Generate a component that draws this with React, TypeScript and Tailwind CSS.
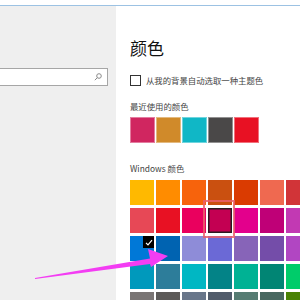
import React from "react";

const recent = ["#d02660", "#d08a2a", "#10b7c6", "#4a4848", "#e81123"];
const grid = [
  ["#ffb900", "#ff8c00", "#f7630c", "#ca5010", "#da3b01", "#ef6950", "#d13438"],
  ["#e74856", "#e81123", "#ea005e", "#c30052", "#e3008c", "#bf0077", "#c239b3"],
  ["#0078d7", "#0063b1", "#8e8cd8", "#6b69d6", "#8764b8", "#744da9", "#b146c2"],
  ["#0099bc", "#2d7d9a", "#00b7c3", "#038387", "#00b294", "#018574", "#00cc6a"],
  ["#7a7574", "#5d5a58", "#68768a", "#515c6b", "#567c73", "#486860", "#498205"],
];

export default function App() {
  return (
    <div
      className="relative w-[300px] h-[300px] overflow-hidden bg-white flex flex-col"
      style={{ fontFamily: '"Noto Sans CJK SC", "Noto Sans", sans-serif' }}
    >
      <div className="h-[5px] bg-white shrink-0" />
      <div className="h-px bg-[#9cc2e3] shrink-0" />
      <div className="flex flex-1 min-h-0">
        <div className="w-[116px] shrink-0 bg-[#efefef] flex flex-col">
          <div className="mt-[62px] ml-[-2px] w-[110px] h-[18px] bg-white border border-[#a6a6a6] flex items-center justify-end pr-[5px]">
            <svg width="8" height="8" viewBox="0 0 8 8" fill="none" stroke="#8a8a8a" strokeWidth="1">
              <circle cx="5" cy="3" r="2.3" />
              <line x1="3.3" y1="4.7" x2="0.8" y2="7.2" />
            </svg>
          </div>
        </div>
        <div className="flex-1 min-w-0 overflow-hidden bg-white pl-[14px] flex flex-col">
          <div className="mt-[32px] text-[17px] leading-[20px] text-[#111]">颜色</div>
          <div className="mt-[16px] h-[12px] flex items-center gap-[5px]">
            <div className="w-[11px] h-[11px] shrink-0 border-[1.5px] border-[#333] bg-white" />
            <span className="text-[8.4px] leading-[12px] text-[#444] whitespace-nowrap">从我的背景自动选取一种主题色</span>
          </div>
          <div className="mt-[14px] text-[8.4px] leading-[12px] text-[#444]">最近使用的颜色</div>
          <div className="mt-[5px] flex gap-px">
            {recent.map((c) => (
              <div key={c} className="w-[25px] h-[26px] shrink-0 border border-white/40" style={{ backgroundColor: c }} />
            ))}
          </div>
          <div className="mt-[19px] text-[8.4px] leading-[12px] text-[#444]">Windows 颜色</div>
          <div className="mt-[6px] flex flex-col gap-y-[3px]">
            {grid.map((row, ri) => (
              <div key={ri} className="flex gap-x-[2px]">
                {row.map((c, ci) => (
                  <div
                    key={ci}
                    className={
                      "relative w-[24px] h-[25px] shrink-0" +
                      (ri === 1 && ci === 3 ? " shadow-[inset_0_0_0_1.5px_#2a1a20]" : "")
                    }
                    style={{ backgroundColor: c }}
                  >
                    {ri === 2 && ci === 0 && (
                      <div className="absolute top-0 right-0 w-[11px] h-[12px] bg-black flex items-center justify-center">
                        <svg width="8" height="7" viewBox="0 0 8 7" fill="none" stroke="white" strokeWidth="1.2">
                          <polyline points="1,3.8 3,5.8 7,1.2" />
                        </svg>
                      </div>
                    )}
                  </div>
                ))}
              </div>
            ))}
          </div>
        </div>
      </div>
      <div className="absolute left-[203px] top-[200px] w-[32px] h-[38px] border-2 border-[#e9606c]/85" />
      <svg className="absolute left-0 top-0" width="300" height="300" viewBox="0 0 300 300">
        <polygon
          points="35,278 150,258.5 148,249 168,256 151,267 150,264 35,279"
          fill="#f33df3"
        />
      </svg>
    </div>
  );
}
